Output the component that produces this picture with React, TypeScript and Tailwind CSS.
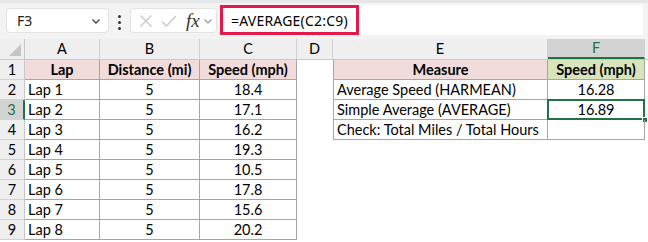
import React from "react";

const COLS = [
  { key: "A", w: "w-[75px]" },
  { key: "B", w: "w-[100px]" },
  { key: "C", w: "w-[97px]" },
  { key: "D", w: "w-[36px]" },
  { key: "E", w: "w-[215px]" },
  { key: "F", w: "w-[97px]" },
];

const laps = [
  ["Lap 1", "5", "18.4"],
  ["Lap 2", "5", "17.1"],
  ["Lap 3", "5", "16.2"],
  ["Lap 4", "5", "19.3"],
  ["Lap 5", "5", "10.5"],
  ["Lap 6", "5", "17.8"],
  ["Lap 7", "5", "15.6"],
  ["Lap 8", "5", "20.2"],
];

const measures: [string, string][] = [
  ["Average Speed (HARMEAN)", "16.28"],
  ["Simple Average (AVERAGE)", "16.89"],
  ["Check: Total Miles / Total Hours", ""],
];

const cellFont = "font-['Lato','Noto_Sans',sans-serif] text-[14.5px] text-black";

function FormulaBar() {
  return (
    <div className="h-[39px] bg-[#f3f3f3] border-t-[3px] border-[#e6e6e6] flex items-start relative font-['Noto_Sans',sans-serif]">
      {/* name box */}
      <div className="mt-[5px] ml-[6px] w-[103px] h-[25px] bg-white rounded-[4px] border border-[#e3e3e3] flex items-center justify-between pl-[10px] pr-[6px]">
        <span className="text-[14px] text-[#222]">F3</span>
        <svg width="12" height="12" viewBox="0 0 12 12" fill="none" stroke="#444" strokeWidth="1.4">
          <path d="M2.5 4.5 L6 8 L9.5 4.5" />
        </svg>
      </div>
      {/* dots */}
      <div className="mt-[12px] ml-[9px] flex flex-col gap-[3px]">
        <span className="w-[3px] h-[3px] bg-[#333] rounded-full" />
        <span className="w-[3px] h-[3px] bg-[#333] rounded-full" />
        <span className="w-[3px] h-[3px] bg-[#333] rounded-full" />
      </div>
      {/* cancel / enter / fx */}
      <div className="mt-[5px] ml-[9px] w-[87px] h-[25px] bg-white rounded-[4px] border border-[#e3e3e3] flex items-center pl-[8px] gap-[8px]">
        <svg width="14" height="14" viewBox="0 0 14 14" fill="none" stroke="#c6c6c6" strokeWidth="1.3">
          <path d="M1.5 1.5 L12.5 12.5 M12.5 1.5 L1.5 12.5" />
        </svg>
        <svg width="16" height="14" viewBox="0 0 16 14" fill="none" stroke="#c6c6c6" strokeWidth="1.3">
          <path d="M1 7.5 L5.5 12 L15 2" />
        </svg>
        <span className="ml-[1px] font-['Liberation_Serif',serif] italic text-[19px] text-[#333] leading-none">
          fx
        </span>
        <svg width="10" height="10" viewBox="0 0 10 10" fill="none" stroke="#999" strokeWidth="1.2" className="-ml-[5px]">
          <path d="M1.5 3.5 L5 7 L8.5 3.5" />
        </svg>
      </div>
      {/* formula input */}
      <div className="mt-[2px] ml-[3px] w-[423px] h-[30px] bg-white flex items-center">
        <div className="h-[30px] w-[139px] border-[3px] border-[#e2194a] flex items-center pl-[8px]">
          <span className="font-['Noto_Sans',sans-serif] text-[14px] text-black tracking-[0.2px]">
            =AVERAGE(C2:C9)
          </span>
        </div>
      </div>
    </div>
  );
}

function HeaderRow() {
  return (
    <div className="flex h-[21px] bg-[#efefef] border-b border-[#c8c8c8]">
      <div className="w-[25px] border-r border-[#c8c8c8] relative">
        <svg width="12" height="12" viewBox="0 0 12 12" className="absolute right-[3px] bottom-[3px]">
          <path d="M12 0 L12 12 L0 12 Z" fill="#c5c5c5" />
        </svg>
      </div>
      {COLS.map((c) => (
        <div
          key={c.key}
          className={`${c.w} flex items-center justify-center border-r border-[#d2d2d2] ${cellFont} ${
            c.key === "F" ? "bg-[#d3d3d3] !text-[#217346] border-b-2 border-b-[#217346]" : "text-[#222]"
          }`}
        >
          {c.key}
        </div>
      ))}
      <div className="flex-1" />
    </div>
  );
}

function RowHead({ n }: { n: number }) {
  const sel = n === 3;
  return (
    <div
      className={`w-[25px] flex items-center justify-center border-b border-[#d2d2d2] ${cellFont} ${
        sel ? "bg-[#d3d3d3] !text-[#217346] border-r-2 border-r-[#217346]" : "bg-[#efefef] border-r border-r-[#c8c8c8] text-[#222]"
      }`}
    >
      {n}
    </div>
  );
}

export default function App() {
  const rows = Array.from({ length: 9 }, (_, i) => i + 1);
  return (
    <div className="w-[648px] h-[242px] bg-white overflow-hidden">
      <FormulaBar />
      <HeaderRow />
      {rows.map((r) => {
        const lap = r >= 2 ? laps[r - 2] : null;
        const m = r >= 2 && r <= 4 ? measures[r - 2] : null;
        const hdr = r === 1;
        const tb = "border-r border-b border-[#a6a6a6]";
        return (
          <div key={r} className="flex h-[20px]">
            <RowHead n={r} />
            {/* A */}
            <div
              className={`w-[75px] flex items-center ${tb} ${cellFont} ${
                hdr ? "bg-[#f2dcdb] justify-center font-bold" : "pl-[3px]"
              }`}
            >
              {hdr ? "Lap" : lap![0]}
            </div>
            {/* B */}
            <div className={`w-[100px] flex items-center justify-center ${tb} ${cellFont} ${hdr ? "bg-[#f2dcdb] font-bold" : ""}`}>
              {hdr ? "Distance (mi)" : lap![1]}
            </div>
            {/* C */}
            <div className={`w-[97px] flex items-center justify-center ${tb} ${cellFont} ${hdr ? "bg-[#f2dcdb] font-bold" : ""}`}>
              {hdr ? "Speed (mph)" : lap![2]}
            </div>
            {/* D */}
            <div className="w-[36px]" />
            {/* E */}
            {r <= 4 ? (
              <div
                className={`w-[215px] flex items-center border-l ${tb} ${cellFont} ${
                  hdr ? "bg-[#f2dcdb] justify-center font-bold" : "pl-[3px]"
                }`}
              >
                {hdr ? "Measure" : m![0]}
              </div>
            ) : (
              <div className="w-[215px]" />
            )}
            {/* F */}
            {r <= 4 ? (
              <div
                className={`relative w-[97px] flex items-center justify-center ${tb} ${cellFont} ${
                  hdr ? "bg-[#d8e4bc] font-bold" : ""
                }`}
              >
                {hdr ? "Speed (mph)" : m![1]}
                {r === 3 && (
                  <>
                    <div className="absolute -left-[1px] -top-[1px] -right-[1px] -bottom-[1px] border-2 border-[#217346]" />
                    <div className="absolute -right-[4px] -bottom-[4px] w-[6px] h-[6px] bg-[#217346] border border-white" />
                  </>
                )}
              </div>
            ) : (
              <div className="w-[97px]" />
            )}
          </div>
        );
      })}
    </div>
  );
}
